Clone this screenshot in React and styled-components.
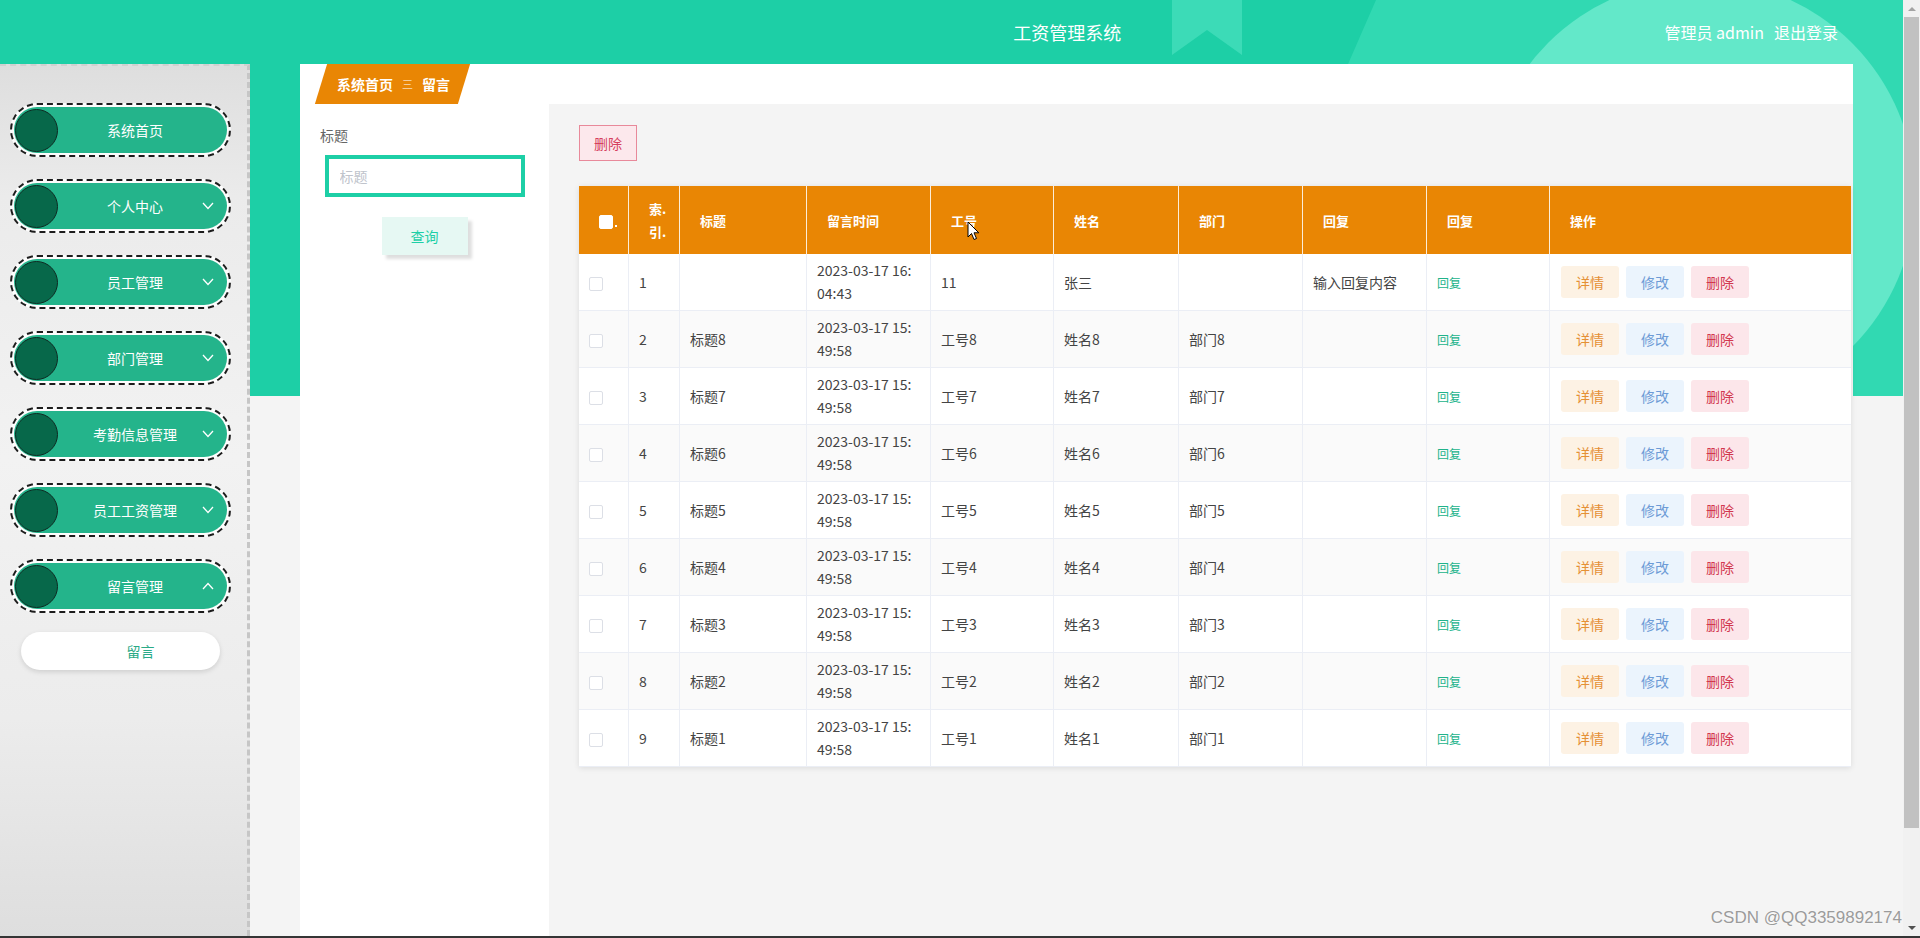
import React from 'react';
import styled, { createGlobalStyle } from 'styled-components';

const GlobalStyle = createGlobalStyle`
  html, body { margin: 0; padding: 0; }
  body {
    font-family: "Noto Sans CJK SC", "Noto Sans", sans-serif;
    background: #f4f4f4;
    overflow: hidden;
  }
  * { box-sizing: border-box; }
`;

const Viewport = styled.div`
  position: relative;
  display: flex;
  width: 1920px;
  height: 938px;
  background: #f4f4f4;
  border-bottom: 2px solid #353535;
  overflow: hidden;
`;

const Main = styled.div`
  position: relative;
  flex: 1;
  min-width: 0;
  display: flex;
  flex-direction: column;
`;

const Backdrop = styled.svg`
  position: absolute;
  top: 0;
  left: 0;
  z-index: 0;
  display: block;
`;

const Header = styled.header`
  position: relative;
  z-index: 1;
  flex: none;
  height: 64px;
  display: flex;
  align-items: center;
  padding-right: 65px;
  color: #fff;
`;

const Title = styled.div`
  flex: 1;
  padding-left: 470px;
  text-align: center;
  font-size: 18px;
  line-height: 24px;
`;

const UserBox = styled.div`
  display: flex;
  align-items: center;
  gap: 10px;
  font-size: 16px;
  line-height: 22px;
`;

const Body = styled.div`
  position: relative;
  z-index: 1;
  flex: 1;
  min-height: 0;
  display: flex;
`;

const Sidebar = styled.aside`
  flex: none;
  width: 250px;
  padding-top: 37px;
  background: linear-gradient(180deg, #dedede 0%, #ebebeb 15%, #f2f2f2 45%, #ececec 75%, #dedede 100%);
  border-top: 2px dashed #d0d0d0;
  border-right: 3px dashed #c6c6c6;
  display: flex;
  flex-direction: column;
  gap: 22px;
`;

const MenuOutline = styled.div`
  margin-left: 10px;
  width: 221px;
  height: 54px;
  padding: 2px;
  border: 2px dashed #1c1c1c;
  border-radius: 28px;
  background: rgba(255, 255, 255, 0.85);
`;

const MenuPill = styled.div`
  position: relative;
  height: 46px;
  display: flex;
  align-items: center;
  padding-right: 15px;
  border-radius: 23px;
  background: #24b48b;
  color: #fff;
  font-size: 14px;
`;

const MenuDot = styled.span`
  flex: none;
  width: 43px;
  height: 43px;
  margin-left: 1px;
  border-radius: 50%;
  background: #07684a;
  border: 1.5px solid #0f2a22;
`;

const MenuLabel = styled.span`
  flex: 1;
  text-align: center;
  line-height: 20px;
`;

const MenuArrow = styled.svg`
  position: absolute;
  right: 13px;
  top: 19px;
`;

const SubItem = styled.div`
  margin: -3px 0 0 21px;
  width: 199px;
  height: 38px;
  padding-left: 40px;
  border-radius: 19px;
  background: #fff;
  box-shadow: 0 2px 5px rgba(0, 0, 0, 0.13);
  color: #2aaa87;
  font-size: 14px;
  line-height: 38px;
  text-align: center;
`;

const Content = styled.div`
  flex: 1;
  min-width: 0;
  padding: 0 50px;
  display: flex;
  flex-direction: column;
`;

const CrumbBar = styled.div`
  flex: none;
  height: 40px;
  background: #fff;
  padding-left: 21px;
  display: flex;
`;

const Crumb = styled.div`
  width: 143px;
  height: 40px;
  background: #e98604;
  transform: skewX(-17deg);
`;

const CrumbInner = styled.div`
  height: 100%;
  transform: skewX(17deg);
  display: flex;
  align-items: center;
  padding-left: 16px;
  color: #fff;
  font-size: 14px;
  font-weight: 700;
  line-height: 20px;
`;

const CrumbSep = styled.span`
  margin: 0 9px;
  font-size: 11px;
  font-weight: 300;
`;

const Panels = styled.div`
  flex: 1;
  display: flex;
  min-height: 0;
`;

const SearchPanel = styled.div`
  flex: none;
  width: 249px;
  background: #fff;
  padding-top: 21px;
  display: flex;
  flex-direction: column;
  align-items: center;
`;

const FieldLabel = styled.div`
  align-self: flex-start;
  margin-left: 20px;
  color: #666;
  font-size: 14px;
  line-height: 20px;
`;

const SearchInput = styled.input`
  margin-top: 10px;
  width: 200px;
  height: 42px;
  padding: 0 11px;
  border: 4px solid #1dcfa6;
  outline: none;
  font-family: inherit;
  font-size: 14px;
  color: #333;
  background: #fff;
  &::placeholder { color: #c0c4cc; }
`;

const QueryButton = styled.button`
  margin-top: 20px;
  width: 86px;
  height: 38px;
  border: none;
  background: #e6f8f3;
  color: #1dcfa6;
  font-family: inherit;
  font-size: 14px;
  box-shadow: 4px 4px 3px rgba(0, 0, 0, 0.13);
  cursor: pointer;
`;

const ListArea = styled.div`
  flex: 1;
  min-width: 0;
  background: #f4f4f4;
  padding: 21px 2px 0 30px;
`;

const DangerButton = styled.button`
  display: block;
  width: 58px;
  height: 36px;
  padding: 0;
  border: 1px solid #e8899a;
  background: #fce8ec;
  color: #d6405e;
  font-family: inherit;
  font-size: 14px;
`;

const TableWrap = styled.div`
  margin-top: 25px;
  background: #fff;
  box-shadow: 0 1px 6px rgba(0, 0, 0, 0.1);
`;

const Table = styled.table`
  width: 100%;
  table-layout: fixed;
  border-collapse: separate;
  border-spacing: 0;
`;

const Col = styled.col`
  width: ${(p) => (p.$w ? `${p.$w}px` : 'auto')};
`;

const Th = styled.th`
  height: 68px;
  padding: 0 0 0 20px;
  background: #e98604;
  color: #fff;
  font-size: 13px;
  font-weight: 700;
  text-align: left;
  line-height: 23px;
  vertical-align: middle;
  border-right: 1px solid rgba(255, 255, 255, 0.85);
  &:last-child { border-right: none; }
`;

const Tr = styled.tr`
  background: ${(p) => (p.$striped ? '#fafafa' : '#fff')};
`;

const Td = styled.td`
  height: 57px;
  padding: 0 10px;
  border-bottom: 1px solid #ebeef5;
  border-right: 1px solid #ebeef5;
  color: #444;
  font-size: 14px;
  line-height: 23px;
  vertical-align: middle;
  &:last-child { border-right: none; }
`;

const Check = styled.span`
  display: inline-block;
  vertical-align: middle;
  width: 14px;
  height: 14px;
  border-radius: 2px;
  border: 1px solid ${(p) => (p.$head ? '#fff' : '#dcdfe6')};
  background: #fff;
`;

const HeadDot = styled.span`
  display: inline-block;
  vertical-align: middle;
  margin: 8px 0 0 2px;
  width: 2px;
  height: 2px;
  background: #fff;
`;

const ReplyLink = styled.span`
  color: #21b38a;
  font-size: 12px;
`;

const Ops = styled.div`
  display: flex;
  gap: 7px;
  padding-left: 1px;
`;

const OpButton = styled.span`
  display: inline-block;
  height: 32px;
  padding: 0 15px;
  border-radius: 3px;
  font-size: 14px;
  line-height: 32px;
  background: ${(p) => p.$bg};
  color: ${(p) => p.$fg};
`;

const ScrollTrack = styled.div`
  flex: none;
  width: 17px;
  display: flex;
  flex-direction: column;
  background: #f1f1f1;
`;

const ScrollArrow = styled.div`
  flex: none;
  height: 17px;
  display: flex;
  align-items: center;
  justify-content: center;
  &::before {
    content: '';
    border-left: 4px solid transparent;
    border-right: 4px solid transparent;
    ${(p) => (p.$down ? 'border-top: 4px solid #505050;' : 'border-bottom: 4px solid #a3a3a3;')}
  }
`;

const ScrollRail = styled.div`
  flex: 1;
  padding: 0 1px;
`;

const ScrollThumb = styled.div`
  height: 811px;
  background: #c1c1c1;
`;

const Watermark = styled.div`
  position: absolute;
  right: 18px;
  bottom: 8px;
  z-index: 3;
  font-family: "Liberation Sans", Arial, sans-serif;
  font-size: 17px;
  line-height: 20px;
  color: #9b9b9b;
  text-shadow: 0 0 2px #fff;
`;

const Cursor = styled.svg`
  position: absolute;
  left: 967px;
  top: 221px;
  z-index: 4;
`;

const Chevron = ({ up }) => (
  <MenuArrow width="12" height="8" viewBox="0 0 12 8">
    <polyline
      points={up ? '1,7 6,1.5 11,7' : '1,1 6,6.5 11,1'}
      fill="none"
      stroke="#fff"
      strokeWidth="1.3"
    />
  </MenuArrow>
);

const menus = [
  { label: '系统首页' },
  { label: '个人中心', arrow: 'down' },
  { label: '员工管理', arrow: 'down' },
  { label: '部门管理', arrow: 'down' },
  { label: '考勤信息管理', arrow: 'down' },
  { label: '员工工资管理', arrow: 'down' },
  { label: '留言管理', arrow: 'up' },
];

const rows = [
  { idx: 1, title: '', t1: '2023-03-17 16:', t2: '04:43', no: '11', name: '张三', dept: '', reply: '输入回复内容' },
  ...[8, 7, 6, 5, 4, 3, 2, 1].map((n, i) => ({
    idx: i + 2,
    title: `标题${n}`,
    t1: '2023-03-17 15:',
    t2: '49:58',
    no: `工号${n}`,
    name: `姓名${n}`,
    dept: `部门${n}`,
    reply: '',
  })),
];

const colWidths = [50, 51, 127, 124, 123, 125, 124, 124, 123, null];

export default function App() {
  return (
    <>
      <GlobalStyle />
      <Viewport>
        <Main>
          <Backdrop width="1903" height="396" viewBox="0 0 1903 396" aria-hidden="true">
            <rect x="0" y="0" width="1903" height="396" fill="#1dcfa6" />
            <polygon points="1376,0 1903,0 1903,396 1203,396" fill="#31d9b2" />
            <circle cx="1700" cy="195" r="215" fill="#63e8c9" />
            <polygon points="1172,0 1242,0 1242,55 1207,30 1172,55" fill="#3cdbb7" />
          </Backdrop>

          <Header>
            <Title>工资管理系统</Title>
            <UserBox>
              <span>管理员 admin</span>
              <span>退出登录</span>
            </UserBox>
          </Header>

          <Body>
            <Sidebar>
              {menus.map((m) => (
                <MenuOutline key={m.label}>
                  <MenuPill>
                    <MenuDot />
                    <MenuLabel>{m.label}</MenuLabel>
                    {m.arrow && <Chevron up={m.arrow === 'up'} />}
                  </MenuPill>
                </MenuOutline>
              ))}
              <SubItem>留言</SubItem>
            </Sidebar>

            <Content>
              <CrumbBar>
                <Crumb>
                  <CrumbInner>
                    <span>系统首页</span>
                    <CrumbSep>三</CrumbSep>
                    <span>留言</span>
                  </CrumbInner>
                </Crumb>
              </CrumbBar>

              <Panels>
                <SearchPanel>
                  <FieldLabel>标题</FieldLabel>
                  <SearchInput placeholder="标题" />
                  <QueryButton>查询</QueryButton>
                </SearchPanel>

                <ListArea>
                  <DangerButton>删除</DangerButton>
                  <TableWrap>
                    <Table>
                      <colgroup>
                        {colWidths.map((w, i) => (
                          <Col key={i} $w={w} />
                        ))}
                      </colgroup>
                      <thead>
                        <tr>
                          <Th>
                            <Check $head />
                            <HeadDot />
                          </Th>
                          <Th>
                            索.
                            <br />
                            引.
                          </Th>
                          <Th>标题</Th>
                          <Th>留言时间</Th>
                          <Th>工号</Th>
                          <Th>姓名</Th>
                          <Th>部门</Th>
                          <Th>回复</Th>
                          <Th>回复</Th>
                          <Th>操作</Th>
                        </tr>
                      </thead>
                      <tbody>
                        {rows.map((r, i) => (
                          <Tr key={r.idx} $striped={i % 2 === 1}>
                            <Td>
                              <Check />
                            </Td>
                            <Td>{r.idx}</Td>
                            <Td>{r.title}</Td>
                            <Td>
                              {r.t1}
                              <br />
                              {r.t2}
                            </Td>
                            <Td>{r.no}</Td>
                            <Td>{r.name}</Td>
                            <Td>{r.dept}</Td>
                            <Td>{r.reply}</Td>
                            <Td>
                              <ReplyLink>回复</ReplyLink>
                            </Td>
                            <Td>
                              <Ops>
                                <OpButton $bg="#fdf2e4" $fg="#e59035">详情</OpButton>
                                <OpButton $bg="#ebf4fd" $fg="#6d9bd6">修改</OpButton>
                                <OpButton $bg="#fce6ea" $fg="#d2374f">删除</OpButton>
                              </Ops>
                            </Td>
                          </Tr>
                        ))}
                      </tbody>
                    </Table>
                  </TableWrap>
                </ListArea>
              </Panels>
            </Content>
          </Body>
        </Main>

        <ScrollTrack>
          <ScrollArrow />
          <ScrollRail>
            <ScrollThumb />
          </ScrollRail>
          <ScrollArrow $down />
        </ScrollTrack>

        <Cursor width="13" height="20" viewBox="0 0 13 20" aria-hidden="true">
          <path d="M1 1 L1 16 L4.5 12.5 L7 18.5 L9.5 17.5 L7 11.8 L11.8 11.8 Z" fill="#fff" stroke="#000" strokeWidth="1" strokeLinejoin="round" />
        </Cursor>

        <Watermark>CSDN @QQ3359892174</Watermark>
      </Viewport>
    </>
  );
}
